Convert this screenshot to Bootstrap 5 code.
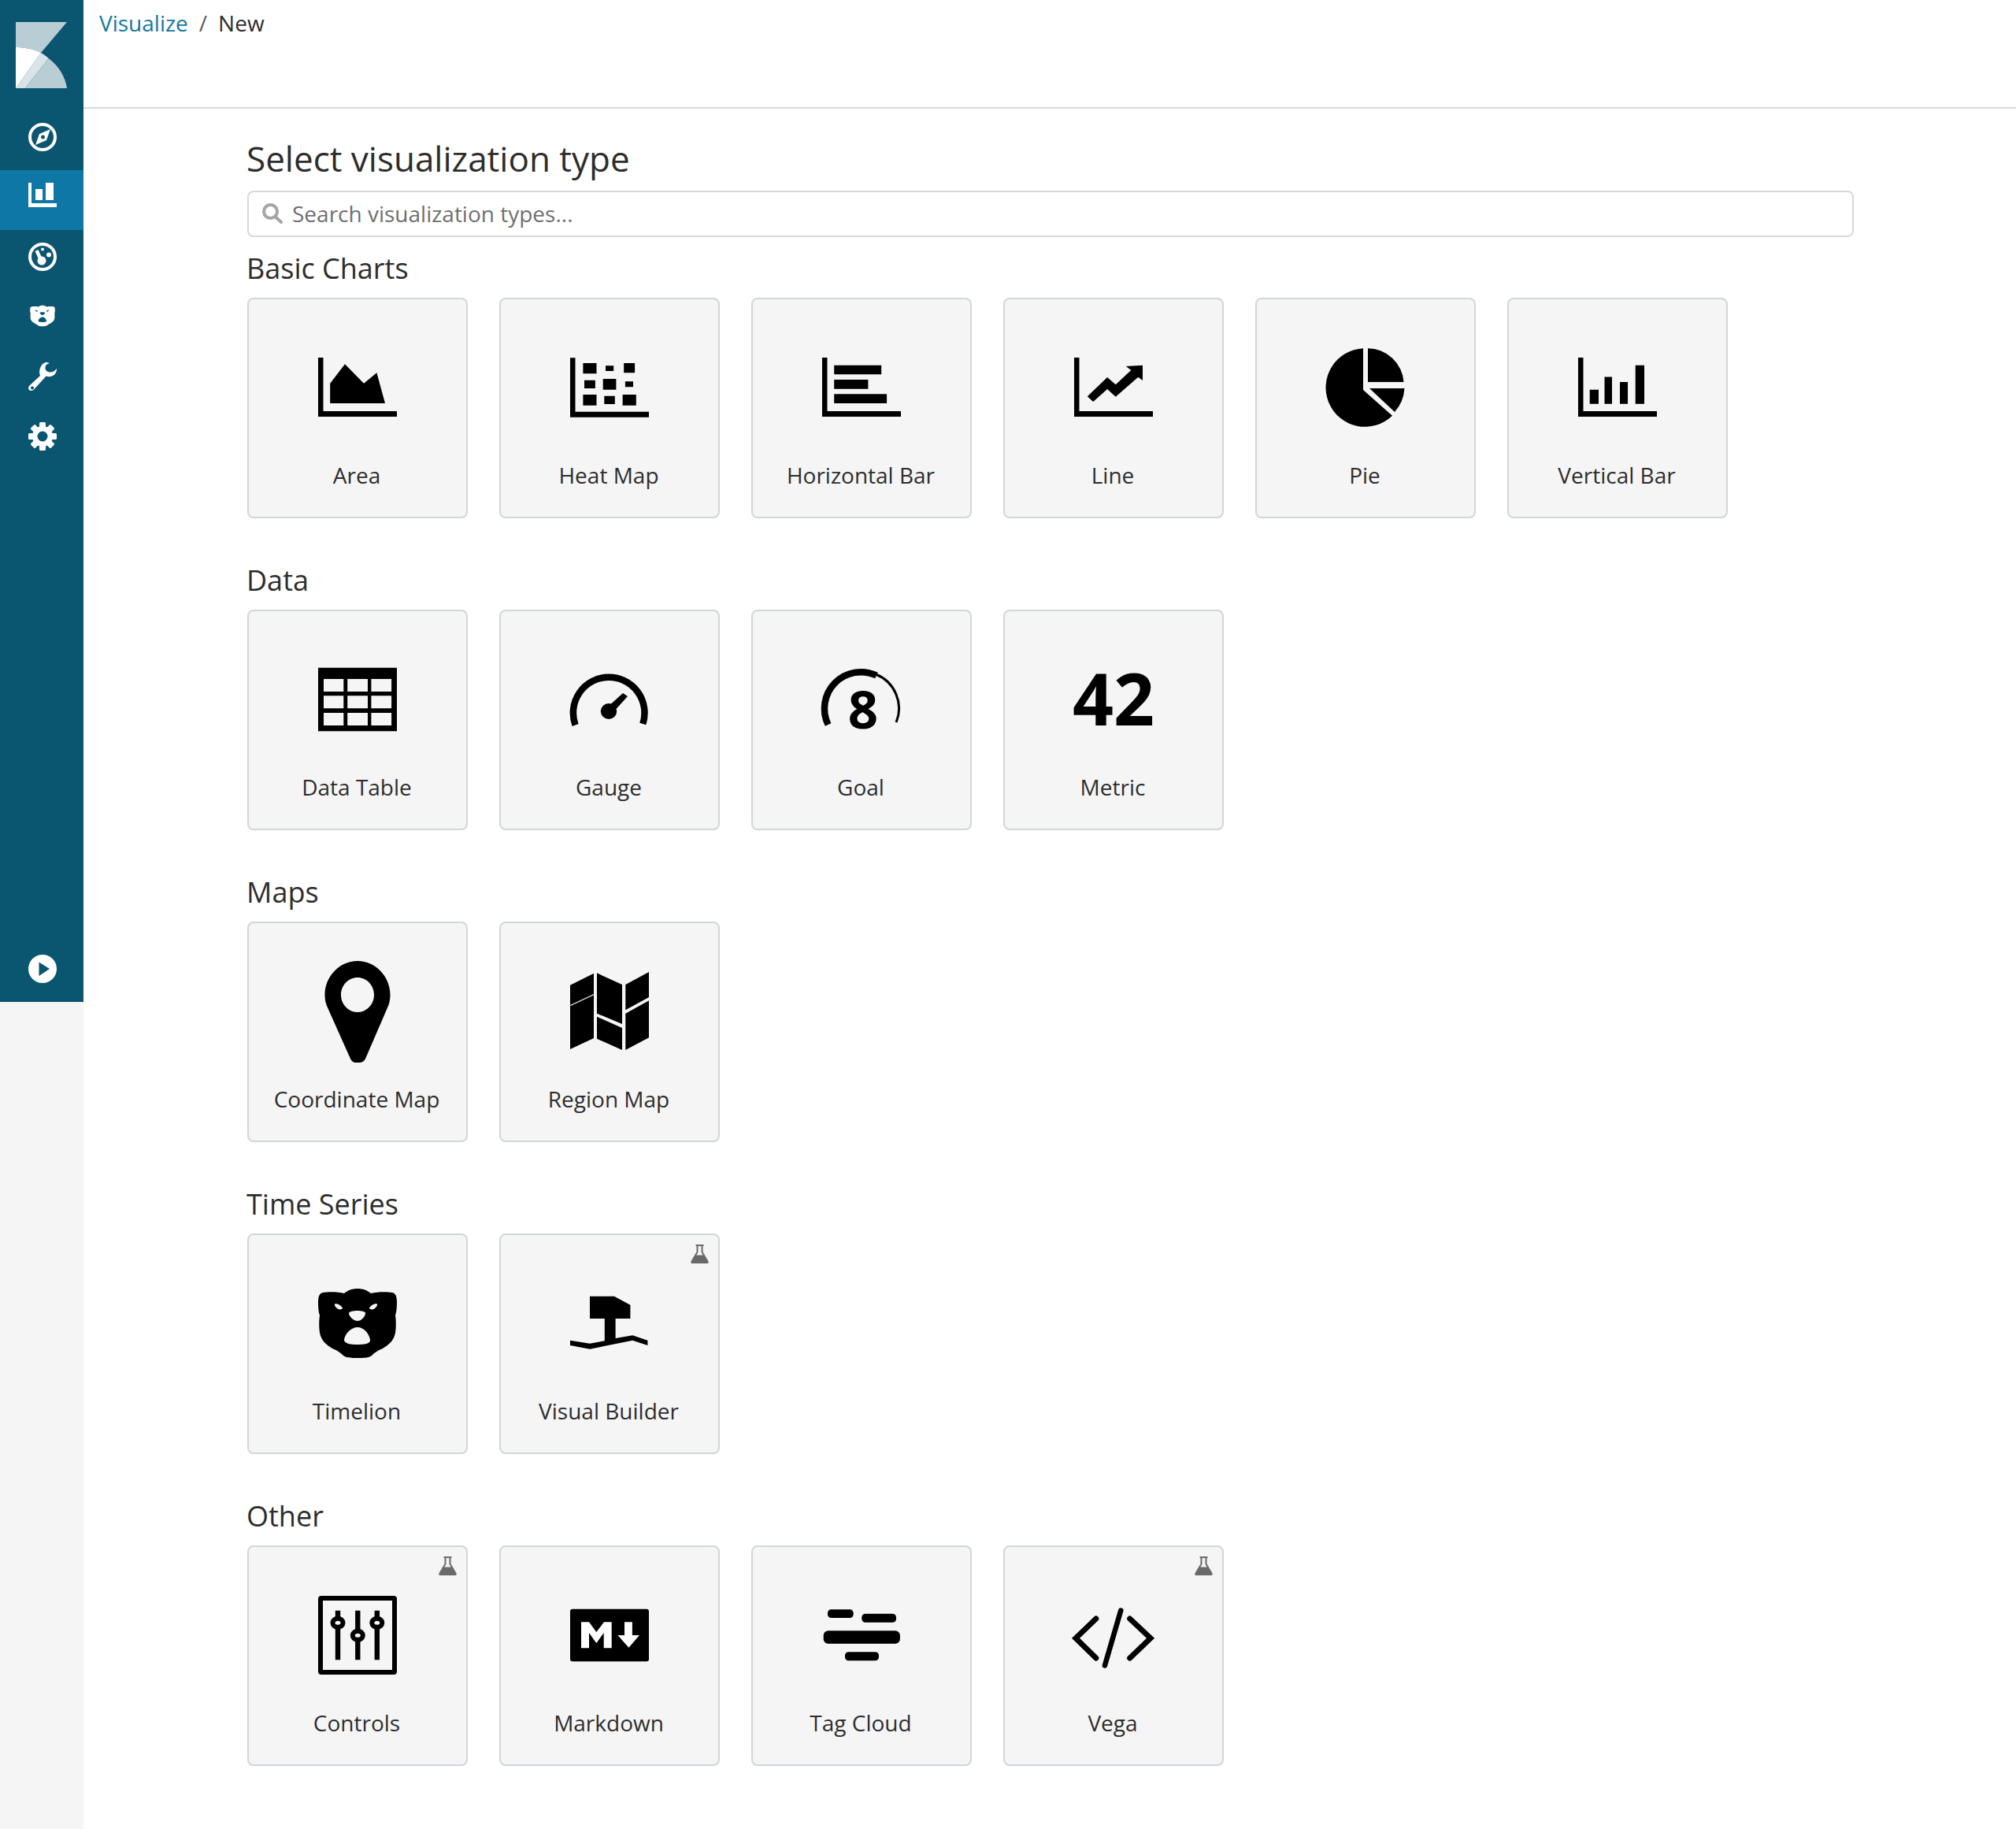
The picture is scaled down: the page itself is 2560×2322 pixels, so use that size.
<!DOCTYPE html>
<html lang="en">
<head>
<meta charset="utf-8">
<title>Visualize - New</title>
<link href="https://cdn.jsdelivr.net/npm/bootstrap@5.3.0/dist/css/bootstrap.min.css" rel="stylesheet">
<style>
body{font-family:"Open Sans","Noto Sans",sans-serif;color:#2d2d2d;font-size:28px;background:#fff}
.app-rail{width:106px;background:#f5f5f5;flex:none}
.rail-inner{height:1272px;background:#0a5570;color:#fff}
.rail-logo{height:140px;padding:28px 0 0 20px}
.rail-item{height:76px;padding:15px 0 0 36px}
.rail-item svg{display:block;overflow:visible}
.rail-active{background:#0f77a5}
.rail-nudge{padding-top:16px}
.top-head{height:138px;border-bottom:2px solid #d9d9d9;padding:9px 0 0 20px}
.top-head .breadcrumb{--bs-breadcrumb-margin-bottom:0;--bs-breadcrumb-item-padding-x:14px;--bs-breadcrumb-divider-color:#5a5a5a;--bs-breadcrumb-item-active-color:#2d2d2d;font-size:28px;line-height:40px}
.top-head a{color:#15789f;text-decoration:none}
.main-wrap{width:2248px;padding:38px 0 80px 208px}
.page-title{font-size:44px;font-weight:400;line-height:50px;margin:0 0 16px -1px}
.search-box{height:59px;margin-bottom:21px}
.search-box .form-control{height:59px;border:2px solid #d9d9d9;border-radius:8px;padding:0 0 2px 55px;font-size:28px;color:#2d2d2d}
.search-box .form-control::placeholder{color:#6f6f6f}
.search-glyph{left:19px;top:16px}
.group-title{font-size:36px;font-weight:400;line-height:38px;margin:0 0 18px -1px}
.tile-row{gap:40px;margin-bottom:60px}
.viz-tile{width:280px;height:280px;background:#f5f5f6;border:2px solid #d0d6dc;border-radius:8px;padding-top:62px;align-items:center;color:#2d2d2d}
.viz-tile>svg.tile-icon{display:block;overflow:visible;flex:none}
.tile-label{margin-top:41px;padding-right:2px;line-height:40px;font-size:28px;white-space:nowrap}
.lab-flag{right:12px;top:12px}
.num-glyph{font-family:"Open Sans",sans-serif;font-weight:700}
</style>
</head>
<body>
<svg width="0" height="0" class="position-absolute">
<symbol id="flask" viewBox="0 0 23 24"><path d="M6.5 1h10M8.5 1v8.500L1.700 21.300Q1 23 2.500 23h18q1.500 0 .8-1.700L14.500 9.500V1" fill="none" stroke="#6a6a6a" stroke-width="2"/><path d="M5.700 13.500h11.600l5.200 8.500q.7 2-1.500 2H2q-2.200 0-1.500-2z" fill="#6a6a6a"/></symbol>
<symbol id="bear" viewBox="0 0 100 100" overflow="visible"><path fill-rule="evenodd" d="M50 6C43 6 38 8 33 12C26 10 12 10 6 11C1 12 0 17 0 24C0 32 1 37 2 40C1 46 1 55 2 62C4 72 10 77 18 82C25 85 28 87 32 91C36 94 42 94 50 94C58 94 64 94 68 91C72 87 75 85 82 82C90 77 96 72 98 62C99 55 99 46 98 40C99 37 100 32 100 24C100 17 99 12 94 11C88 10 74 10 67 12C62 8 57 6 50 6ZM22 25C26 25 31 29 31 31C30 33 25 33 23 30C21 28 20 26 22 25ZM74 25C70 25 65 29 65 31C66 33 71 33 73 30C75 28 76 26 74 25ZM39 37C40 33 60 33 60 37C60 42 54 47 50 47C46 47 39 42 39 37ZM50 55C58 55 65 63 66 71C67 76 58 77 50 77C42 77 33 76 33 71C34 63 42 55 50 55Z" /></symbol>
</svg>
<div class="d-flex min-vh-100">
  <nav class="app-rail">
    <div class="rail-inner d-flex flex-column">
      <div class="rail-logo">
        <svg width="65" height="84" viewBox="0 0 65 84"><path d="M0 0H65L32 39C22 34 11 32 0 32Z" fill="#b8cdd4"/><path d="M41.700 46C55 56 63 70 65 84H11.700Z" fill="#b8cdd4"/><path d="M32 39C36 41 39 44 41.700 46L11.700 84H0Z" fill="#d9e4e8"/><path d="M0 32C11 32 22 34 32 39L0 84Z" fill="#fff"/></svg>
      </div>
      <div class="rail-item"><svg width="36" height="36" viewBox="0 0 36 36"><circle cx="18" cy="19" r="16" fill="none" stroke="#fff" stroke-width="4"/><path fill="#fff" fill-rule="evenodd" d="M28 9L23 23L9 29L14 15ZM18.500 16.500a2.500 2.500 0 1 0 .01 0Z"/></svg></div>
      <div class="rail-item rail-active"><svg width="36" height="36" viewBox="0 0 36 36" fill="#fff"><path d="M0 1H4V27H36V32H0Z"/><path d="M9 9H18V23H9ZM22 1H32V23H22Z"/></svg></div>
      <div class="rail-item"><svg width="36" height="36" viewBox="0 0 36 36" fill="#fff"><circle cx="18" cy="19" r="16" fill="none" stroke="#fff" stroke-width="4"/><circle cx="18" cy="9.500" r="2"/><circle cx="26" cy="16.500" r="3"/><circle cx="17" cy="24" r="5.500"/><path d="M8.500 12L12.500 10L18 22L14 24Z"/></svg></div>
      <div class="rail-item rail-nudge"><svg width="36" height="36" viewBox="0 0 36 36"><svg x="0" y="4" width="36" height="30" viewBox="0 6 100 88" preserveAspectRatio="none" fill="#fff"><use href="#bear" fill="#fff"/></svg></svg></div>
      <div class="rail-item rail-nudge"><svg width="36" height="36" viewBox="0 0 36 36"><path fill="#fff" fill-rule="evenodd" d="M22 0C24 0 26 0.500 27 1.200C24 1.500 22 3 21.500 6C21 10 24 12.500 27.500 12.500C31 12.500 33.500 11 36 8C36.300 12 34 16 30 17.500C27 18.500 25 18.200 22.500 17.500L8 33.500C5.500 36.500 2.500 36.500 1 35C-0.500 33.500 -0.300 31 2 29L15 17C13.500 13.500 14 9 15.500 6C17 2.500 19.500 0.500 22 0ZM5 30.500a2 2 0 1 0 .01 0Z"/></svg></div>
      <div class="rail-item"><svg width="36" height="36" viewBox="0 0 36 36" fill="#fff"><g transform="translate(18 19)"><rect x="-4" y="-18" width="8" height="36" rx="1.500"/><rect x="-4" y="-18" width="8" height="36" rx="1.500" transform="rotate(45)"/><rect x="-4" y="-18" width="8" height="36" rx="1.500" transform="rotate(90)"/><rect x="-4" y="-18" width="8" height="36" rx="1.500" transform="rotate(135)"/><circle r="13"/><circle r="6.500" fill="#0a5570"/></g></svg></div>
      <div class="rail-item mt-auto"><svg width="36" height="36" viewBox="0 0 36 36"><circle cx="18" cy="19" r="18" fill="#fff"/><path d="M13.500 10.500L27 19L13.500 28Z" fill="#0a5570"/></svg></div>
    </div>
  </nav>
  <div class="flex-grow-1">
    <header class="top-head">
      <ol class="breadcrumb">
        <li class="breadcrumb-item"><a href="#">Visualize</a></li>
        <li class="breadcrumb-item active" aria-current="page">New</li>
      </ol>
    </header>
    <main class="main-wrap">
      <h1 class="page-title">Select visualization type</h1>
      <div class="search-box position-relative">
        <svg class="search-glyph position-absolute" width="26" height="26" viewBox="0 0 26 26"><circle cx="10.500" cy="10.500" r="8.500" fill="none" stroke="#a5a5a5" stroke-width="4"/><path d="M16.500 17L24 24" stroke="#a5a5a5" stroke-width="4" stroke-linecap="round"/></svg>
        <input class="form-control" type="text" placeholder="Search visualization types...">
      </div>

      <h2 class="group-title">Basic Charts</h2>
      <div class="d-flex flex-wrap tile-row">
        <div class="card viz-tile"><svg class="tile-icon" width="100" height="100" viewBox="0 0 100 100"><path d="M0 12H6.500V80H100V87H0Z"/><path d="M15.200 70V44.700L34 20.300L58 44.700L74.400 31.300L85 70Z"/></svg><div class="tile-label">Area</div></div>
        <div class="card viz-tile"><svg class="tile-icon" width="100" height="100" viewBox="0 0 100 100"><path d="M0 12.300H6.500V80.700H100V87.700H0Z"/><path d="M16.400 19H33.500V32.300H16.400ZM45 22.300H55.200V29H45ZM68.200 19H82.100V31.300H68.200ZM18 40.700H31.900V51H18ZM41.700 39H58.400V52.700H41.700ZM69.900 42.300H80V49.300H69.900ZM16.400 59H33.500V72.700H16.400ZM43.300 60.700H56.800V71H43.300ZM66.600 59H83.800V72.700H66.600Z"/></svg><div class="tile-label">Heat Map</div></div>
        <div class="card viz-tile"><svg class="tile-icon" width="100" height="100" viewBox="0 0 100 100"><path d="M0 12H6.500V80H100V87H0Z"/><path d="M15.200 21.700H75.200V33.300H15.200ZM15.200 40H58.400V51.700H15.200ZM15.200 58.300H82.100V70H15.200Z"/></svg><div class="tile-label">Horizontal Bar</div></div>
        <div class="card viz-tile"><svg class="tile-icon" width="100" height="100" viewBox="0 0 100 100"><path d="M0 12H6.500V80H100V87H0Z"/><path d="M16.800 61.300L42.100 37L52.700 46.300L72.300 28L65.800 23L87 21.700V41L81.300 36.700L52.700 61.700L42.100 52L24.200 68Z"/></svg><div class="tile-label">Line</div></div>
        <div class="card viz-tile"><svg class="tile-icon" width="100" height="100" viewBox="0 0 100 100"><path d="M47 .3V53L84 85.800A49.800 49.800 0 1 1 47 .3Z"/><path d="M53 .3A46 46 0 0 1 98.500 43H53Z"/><path d="M55 51H99.500A49 49 0 0 1 87 81Z"/></svg><div class="tile-label">Pie</div></div>
        <div class="card viz-tile"><svg class="tile-icon" width="100" height="100" viewBox="0 0 100 100"><path d="M0 12H6.500V80H100V87H0Z"/><path d="M14.700 52.700H26V70.800H14.700ZM33.500 36.400H43V70.800H33.500ZM53 43H63V70.800H53ZM72.700 21.800H84V70.800H72.700Z"/></svg><div class="tile-label">Vertical Bar</div></div>
      </div>

      <h2 class="group-title">Data</h2>
      <div class="d-flex flex-wrap tile-row">
        <div class="card viz-tile"><svg class="tile-icon" width="100" height="100" viewBox="0 0 100 100"><path fill-rule="evenodd" d="M0 9.700H100V90.300H0ZM7 24V40H32.300V24ZM37.200 24V40H63V24ZM67.400 24V40H93.100V24ZM7 45.300V61.300H32.300V45.300ZM37.200 45.300V61.300H63V45.300ZM67.400 45.300V61.300H93.100V45.300ZM7 67V83H32.300V67ZM37.200 67V83H63V67ZM67.400 67V83H93.100V67Z"/></svg><div class="tile-label">Data Table</div></div>
        <div class="card viz-tile"><svg class="tile-icon" width="100" height="100" viewBox="0 0 100 100"><path d="M6.600 82.500A45.300 45.300 0 1 1 92.300 81" fill="none" stroke="#000" stroke-width="8.500"/><ellipse cx="49" cy="65" rx="10.200" ry="10"/><path d="M47 60L67 42L73 46L53 68Z"/></svg><div class="tile-label">Gauge</div></div>
        <div class="card viz-tile"><svg class="tile-icon" width="100" height="100" viewBox="0 0 100 100"><path d="M7.600 82A46.500 46.500 0 0 1 69 19.500" fill="none" stroke="#000" stroke-width="8.500"/><path d="M68 18A46.500 46.500 0 0 1 94 79" fill="none" stroke="#000" stroke-width="3"/><text x="52" y="87" text-anchor="middle" font-size="67" class="num-glyph">8</text></svg><div class="tile-label">Goal</div></div>
        <div class="card viz-tile"><svg class="tile-icon" width="100" height="100" viewBox="0 0 100 100"><text x="50" y="82.700" text-anchor="middle" font-size="91" class="num-glyph">42</text></svg><div class="tile-label">Metric</div></div>
      </div>

      <h2 class="group-title">Maps</h2>
      <div class="d-flex flex-wrap tile-row">
        <div class="card viz-tile"><svg class="tile-icon" width="100" height="100" viewBox="0 0 100 100"><path fill-rule="evenodd" d="M50 -14C73 -14 91.500 6 91.500 29C91.500 35 90.500 39 89 43L60.500 109C58 115 54 115 50 115C46 115 43 115 40.500 109L11 43C9.500 39 8.500 35 8.500 29C8.500 6 27 -14 50 -14ZM50 7C38.400 7 29 16.800 29 29C29 41.200 38.400 51 50 51C61.600 51 71 41.200 71 29C71 16.800 61.600 7 50 7Z"/></svg><div class="tile-label">Coordinate Map</div></div>
        <div class="card viz-tile"><svg class="tile-icon" width="100" height="100" viewBox="0 0 100 100"><path d="M0 16.700L30 1.700V28L0 42ZM0 43.300L30 29.300V84L0 98ZM34 1.300L66 16V66L34 52.700ZM34 56.700L66 71V99L34 84.700ZM70.300 16L100 0V32L70.300 48.300ZM70.300 52.700L100 36.300V83.300L70.300 99Z"/></svg><div class="tile-label">Region Map</div></div>
      </div>

      <h2 class="group-title">Time Series</h2>
      <div class="d-flex flex-wrap tile-row">
        <div class="card viz-tile"><svg class="tile-icon" width="100" height="100" viewBox="0 0 100 100"><use href="#bear" fill="#000"/></svg><div class="tile-label">Timelion</div></div>
        <div class="card viz-tile position-relative"><svg class="lab-flag position-absolute" width="23" height="24"><use href="#flask"/></svg><svg class="tile-icon" width="100" height="100" viewBox="0 0 100 100"><path d="M25 15.700H56L76.400 26.700V44H57.600V69L79.300 65.300L98.400 71.700V78L79.300 71.700L25 82.700L0 78V71.700L25 75.700L43.800 72.300V44H25Z"/></svg><div class="tile-label">Visual Builder</div></div>
      </div>

      <h2 class="group-title">Other</h2>
      <div class="d-flex flex-wrap tile-row mb-0">
        <div class="card viz-tile position-relative"><svg class="lab-flag position-absolute" width="23" height="24"><use href="#flask"/></svg><svg class="tile-icon" width="100" height="100" viewBox="0 0 100 100"><rect x="3" y="3" width="94" height="94" rx="1" fill="none" stroke="#000" stroke-width="6"/><path d="M21.800 18.700H28.200V81.300H21.800ZM47.100 18.700H53.500V81.300H47.100ZM71.600 18.700H78V81.300H71.600Z"/><g fill="#f5f5f6" stroke="#000" stroke-width="6"><ellipse cx="25" cy="34.300" rx="6.500" ry="5.500"/><ellipse cx="50.300" cy="50.300" rx="6.500" ry="5.500"/><ellipse cx="74.800" cy="34.300" rx="6.500" ry="5.500"/></g></svg><div class="tile-label">Controls</div></div>
        <div class="card viz-tile"><svg class="tile-icon" width="100" height="100" viewBox="0 0 100 100"><rect y="16.700" width="100" height="66.600" rx="3"/><path fill="#fff" d="M14 66.300V33.300H24L33.300 46L43 33.300H52.700V66.300H42.700V47L33.300 60L24 47V66.300ZM69 33.300H78.900V50H88L74.400 65.700L60.500 50H69Z"/></svg><div class="tile-label">Markdown</div></div>
        <div class="card viz-tile"><svg class="tile-icon" width="100" height="100" viewBox="0 0 100 100"><rect x="7" y="17.300" width="32.700" height="10.700" rx="4.500"/><rect x="50.300" y="22.700" width="43.700" height="11" rx="4.500"/><rect x="1.700" y="44.300" width="97.200" height="16.400" rx="6"/><rect x="29" y="71.300" width="43" height="11" rx="4.500"/></svg><div class="tile-label">Tag Cloud</div></div>
        <div class="card viz-tile position-relative"><svg class="lab-flag position-absolute" width="23" height="24"><use href="#flask"/></svg><svg class="tile-icon" width="100" height="100" viewBox="0 0 100 100"><path d="M27.800 29L2 53.700L27.800 79M70.700 29L97 53.700L70.700 79" fill="none" stroke="#000" stroke-width="7" stroke-linecap="round"/><path d="M59.300 18.500L38.900 88.500" fill="none" stroke="#000" stroke-width="6.500" stroke-linecap="round"/></svg><div class="tile-label">Vega</div></div>
      </div>
    </main>
  </div>
</div>
<script src="https://cdn.jsdelivr.net/npm/bootstrap@5.3.0/dist/js/bootstrap.bundle.min.js"></script>
</body>
</html>
